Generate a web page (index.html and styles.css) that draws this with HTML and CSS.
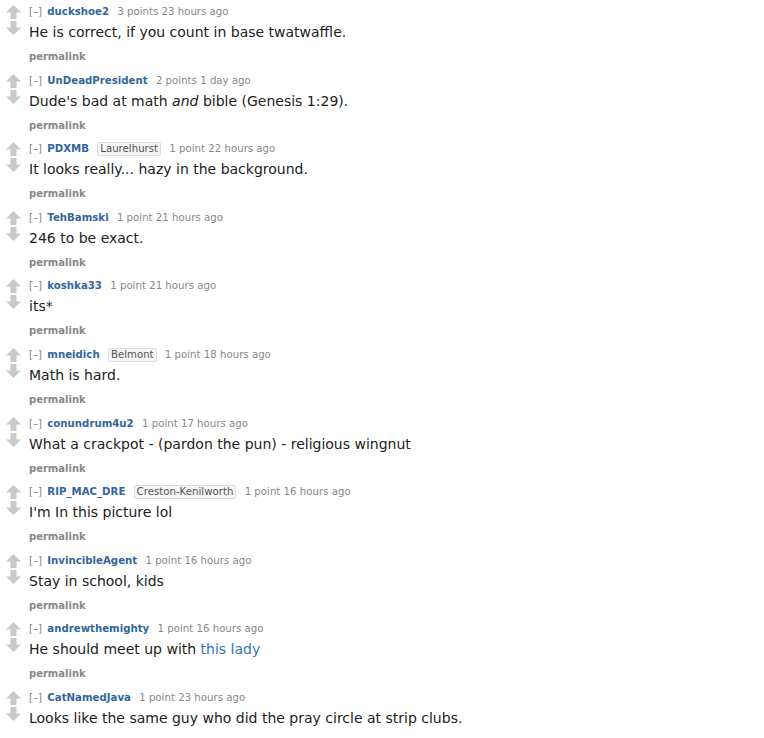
FILE: index.html
```html
<!DOCTYPE html>
<html lang="en">
  <head>
    <meta charset="utf-8" />
    <link rel="stylesheet" href="styles.css">
    <title>Comments</title>
  </head>
  <body>
    <div class="comments">
      <div class="comment">
        <div class="votes">
          <svg class="arrow" viewBox="0 0 15 14"><polygon points="7.5,0 15,7.5 10.5,7.5 10.5,14 4.5,14 4.5,7.5 0,7.5"/></svg>
          <svg class="arrow down" viewBox="0 0 15 14"><polygon points="7.5,0 15,7.5 10.5,7.5 10.5,14 4.5,14 4.5,7.5 0,7.5"/></svg>
        </div>
        <div class="entry">
          <p class="tagline"><a class="expand" href="#">[–]</a> <a class="author" href="#">duckshoe2</a> <span class="score">3 points</span> <time>23 hours ago</time></p>
          <div class="md">He is correct, if you count in base twatwaffle.</div>
          <a class="permalink" href="#">permalink</a>
        </div>
      </div>

      <div class="comment">
        <div class="votes">
          <svg class="arrow" viewBox="0 0 15 14"><polygon points="7.5,0 15,7.5 10.5,7.5 10.5,14 4.5,14 4.5,7.5 0,7.5"/></svg>
          <svg class="arrow down" viewBox="0 0 15 14"><polygon points="7.5,0 15,7.5 10.5,7.5 10.5,14 4.5,14 4.5,7.5 0,7.5"/></svg>
        </div>
        <div class="entry">
          <p class="tagline"><a class="expand" href="#">[–]</a> <a class="author" href="#">UnDeadPresident</a> <span class="score">2 points</span> <time>1 day ago</time></p>
          <div class="md">Dude's bad at math <em>and</em> bible (Genesis 1:29).</div>
          <a class="permalink" href="#">permalink</a>
        </div>
      </div>

      <div class="comment">
        <div class="votes">
          <svg class="arrow" viewBox="0 0 15 14"><polygon points="7.5,0 15,7.5 10.5,7.5 10.5,14 4.5,14 4.5,7.5 0,7.5"/></svg>
          <svg class="arrow down" viewBox="0 0 15 14"><polygon points="7.5,0 15,7.5 10.5,7.5 10.5,14 4.5,14 4.5,7.5 0,7.5"/></svg>
        </div>
        <div class="entry">
          <p class="tagline"><a class="expand" href="#">[–]</a> <a class="author" href="#">PDXMB</a> <span class="flair">Laurelhurst</span> <span class="score">1 point</span> <time>22 hours ago</time></p>
          <div class="md">It looks really... hazy in the background.</div>
          <a class="permalink" href="#">permalink</a>
        </div>
      </div>

      <div class="comment">
        <div class="votes">
          <svg class="arrow" viewBox="0 0 15 14"><polygon points="7.5,0 15,7.5 10.5,7.5 10.5,14 4.5,14 4.5,7.5 0,7.5"/></svg>
          <svg class="arrow down" viewBox="0 0 15 14"><polygon points="7.5,0 15,7.5 10.5,7.5 10.5,14 4.5,14 4.5,7.5 0,7.5"/></svg>
        </div>
        <div class="entry">
          <p class="tagline"><a class="expand" href="#">[–]</a> <a class="author" href="#">TehBamski</a> <span class="score">1 point</span> <time>21 hours ago</time></p>
          <div class="md">246 to be exact.</div>
          <a class="permalink" href="#">permalink</a>
        </div>
      </div>

      <div class="comment">
        <div class="votes">
          <svg class="arrow" viewBox="0 0 15 14"><polygon points="7.5,0 15,7.5 10.5,7.5 10.5,14 4.5,14 4.5,7.5 0,7.5"/></svg>
          <svg class="arrow down" viewBox="0 0 15 14"><polygon points="7.5,0 15,7.5 10.5,7.5 10.5,14 4.5,14 4.5,7.5 0,7.5"/></svg>
        </div>
        <div class="entry">
          <p class="tagline"><a class="expand" href="#">[–]</a> <a class="author" href="#">koshka33</a> <span class="score">1 point</span> <time>21 hours ago</time></p>
          <div class="md">its*</div>
          <a class="permalink" href="#">permalink</a>
        </div>
      </div>

      <div class="comment">
        <div class="votes">
          <svg class="arrow" viewBox="0 0 15 14"><polygon points="7.5,0 15,7.5 10.5,7.5 10.5,14 4.5,14 4.5,7.5 0,7.5"/></svg>
          <svg class="arrow down" viewBox="0 0 15 14"><polygon points="7.5,0 15,7.5 10.5,7.5 10.5,14 4.5,14 4.5,7.5 0,7.5"/></svg>
        </div>
        <div class="entry">
          <p class="tagline"><a class="expand" href="#">[–]</a> <a class="author" href="#">mneidich</a> <span class="flair">Belmont</span> <span class="score">1 point</span> <time>18 hours ago</time></p>
          <div class="md">Math is hard.</div>
          <a class="permalink" href="#">permalink</a>
        </div>
      </div>

      <div class="comment">
        <div class="votes">
          <svg class="arrow" viewBox="0 0 15 14"><polygon points="7.5,0 15,7.5 10.5,7.5 10.5,14 4.5,14 4.5,7.5 0,7.5"/></svg>
          <svg class="arrow down" viewBox="0 0 15 14"><polygon points="7.5,0 15,7.5 10.5,7.5 10.5,14 4.5,14 4.5,7.5 0,7.5"/></svg>
        </div>
        <div class="entry">
          <p class="tagline"><a class="expand" href="#">[–]</a> <a class="author" href="#">conundrum4u2</a> <span class="score">1 point</span> <time>17 hours ago</time></p>
          <div class="md">What a crackpot - (pardon the pun) - religious wingnut</div>
          <a class="permalink" href="#">permalink</a>
        </div>
      </div>

      <div class="comment">
        <div class="votes">
          <svg class="arrow" viewBox="0 0 15 14"><polygon points="7.5,0 15,7.5 10.5,7.5 10.5,14 4.5,14 4.5,7.5 0,7.5"/></svg>
          <svg class="arrow down" viewBox="0 0 15 14"><polygon points="7.5,0 15,7.5 10.5,7.5 10.5,14 4.5,14 4.5,7.5 0,7.5"/></svg>
        </div>
        <div class="entry">
          <p class="tagline"><a class="expand" href="#">[–]</a> <a class="author" href="#">RIP_MAC_DRE</a> <span class="flair">Creston-Kenilworth</span> <span class="score">1 point</span> <time>16 hours ago</time></p>
          <div class="md">I'm In this picture lol</div>
          <a class="permalink" href="#">permalink</a>
        </div>
      </div>

      <div class="comment">
        <div class="votes">
          <svg class="arrow" viewBox="0 0 15 14"><polygon points="7.5,0 15,7.5 10.5,7.5 10.5,14 4.5,14 4.5,7.5 0,7.5"/></svg>
          <svg class="arrow down" viewBox="0 0 15 14"><polygon points="7.5,0 15,7.5 10.5,7.5 10.5,14 4.5,14 4.5,7.5 0,7.5"/></svg>
        </div>
        <div class="entry">
          <p class="tagline"><a class="expand" href="#">[–]</a> <a class="author" href="#">InvincibleAgent</a> <span class="score">1 point</span> <time>16 hours ago</time></p>
          <div class="md">Stay in school, kids</div>
          <a class="permalink" href="#">permalink</a>
        </div>
      </div>

      <div class="comment">
        <div class="votes">
          <svg class="arrow" viewBox="0 0 15 14"><polygon points="7.5,0 15,7.5 10.5,7.5 10.5,14 4.5,14 4.5,7.5 0,7.5"/></svg>
          <svg class="arrow down" viewBox="0 0 15 14"><polygon points="7.5,0 15,7.5 10.5,7.5 10.5,14 4.5,14 4.5,7.5 0,7.5"/></svg>
        </div>
        <div class="entry">
          <p class="tagline"><a class="expand" href="#">[–]</a> <a class="author" href="#">andrewthemighty</a> <span class="score">1 point</span> <time>16 hours ago</time></p>
          <div class="md">He should meet up with <a href="#">this lady</a></div>
          <a class="permalink" href="#">permalink</a>
        </div>
      </div>

      <div class="comment">
        <div class="votes">
          <svg class="arrow" viewBox="0 0 15 14"><polygon points="7.5,0 15,7.5 10.5,7.5 10.5,14 4.5,14 4.5,7.5 0,7.5"/></svg>
          <svg class="arrow down" viewBox="0 0 15 14"><polygon points="7.5,0 15,7.5 10.5,7.5 10.5,14 4.5,14 4.5,7.5 0,7.5"/></svg>
        </div>
        <div class="entry">
          <p class="tagline"><a class="expand" href="#">[–]</a> <a class="author" href="#">CatNamedJava</a> <span class="score">1 point</span> <time>23 hours ago</time></p>
          <div class="md">Looks like the same guy who did the pray circle at strip clubs.</div>
          <a class="permalink" href="#">permalink</a>
        </div>
      </div>
    </div>
  </body>
</html>
```

FILE: styles.css
```css
* {
  box-sizing: border-box;
}

body {
  margin: 0;
  background: #fff;
  font-family: "DejaVu Sans", Verdana, sans-serif;
  color: #222;
}

a {
  text-decoration: none;
}

.comment {
  display: flex;
  height: 68.6px;
  padding-top: 5px;
}

/* vote arrows */
.votes {
  display: flex;
  flex-direction: column;
  gap: 2px;
  width: 29px;
  padding: 0 0 0 6px;
}

.arrow {
  width: 15px;
  height: 14px;
  fill: #c9c9c9;
  display: block;
}

.arrow.down {
  transform: rotate(180deg);
}

.entry {
  display: flex;
  flex-direction: column;
  align-items: flex-start;
}

.tagline {
  margin: 0;
  font-size: 10.2px;
  line-height: 14px;
  color: #888;
  white-space: nowrap;

  & .expand {
    color: #7b8592;
    margin-right: 2px;
  }

  & .author {
    color: #369;
    font-weight: bold;
    margin-right: 5px;
  }

  & .flair {
    display: inline-block;
    background: #f5f5f5;
    border: 1px solid #ddd;
    border-radius: 2px;
    color: #545454;
    padding: 0 2px;
    line-height: 12px;
    margin-right: 5px;
  }
}

.md {
  margin-top: 3px;
  font-size: 14px;
  line-height: 20px;
  color: #222;

  & a {
    color: #3674b7;
  }
}

.permalink {
  margin-top: 8px;
  font-size: 10px;
  line-height: 14px;
  font-weight: bold;
  color: #888;
}
```
